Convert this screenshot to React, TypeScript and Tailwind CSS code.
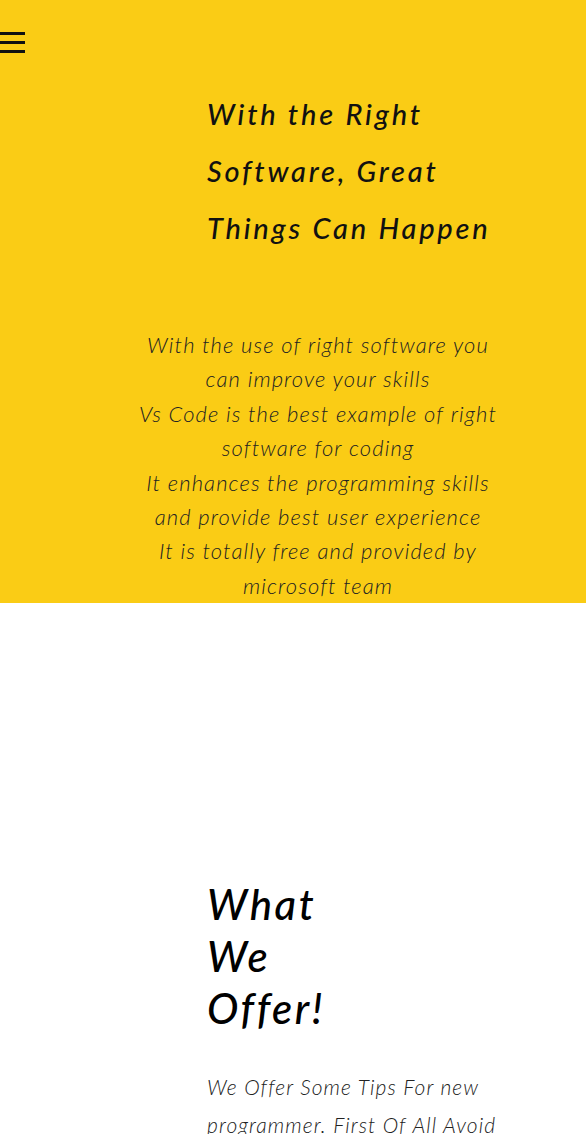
import React from "react";

export default function App() {
  return (
    <div className="w-[586px] min-h-[1134px] bg-white overflow-hidden" style={{ fontFamily: "Lato, 'Open Sans', sans-serif" }}>
      <section className="bg-[#facc15] h-[603px] flex flex-col">
        <div className="pt-[32px] h-[56px]">
          <svg width="26" height="22" viewBox="0 0 26 22" className="block">
            <rect x="0" y="0" width="25" height="3" fill="#111" />
            <rect x="0" y="9" width="25" height="3" fill="#111" />
            <rect x="0" y="18" width="25" height="3" fill="#111" />
          </svg>
        </div>
        <h1 className="pl-[207px] pt-[31px] italic font-medium text-[29px] leading-[57px] tracking-[2.8px] text-[#111]">
          With the Right<br />Software, Great<br />Things Can Happen
        </h1>
        <div className="pt-[72px] pl-[118px] w-[518px]">
          <p className="text-center italic font-light text-[22px] leading-[34.4px] tracking-[1.1px] text-[#222]">
            With the use of right software you<br />
            can improve your skills<br />
            Vs Code is the best example of right<br />
            software for coding<br />
            It enhances the programming skills<br />
            and provide best user experience<br />
            It is totally free and provided by<br />
            microsoft team
          </p>
        </div>
      </section>
      <section className="pl-[207px] pt-[275px] pr-[40px]">
        <h2 className="italic font-medium text-[42px] leading-[52px] tracking-[2.5px] text-black w-[150px]">
          What We Offer!
        </h2>
        <p className="pt-[34px] italic font-light text-[21px] leading-[38px] tracking-[1.1px] text-[#222] whitespace-nowrap">
          We Offer Some Tips For new<br />
          programmer. First Of All Avoid
        </p>
      </section>
    </div>
  );
}
